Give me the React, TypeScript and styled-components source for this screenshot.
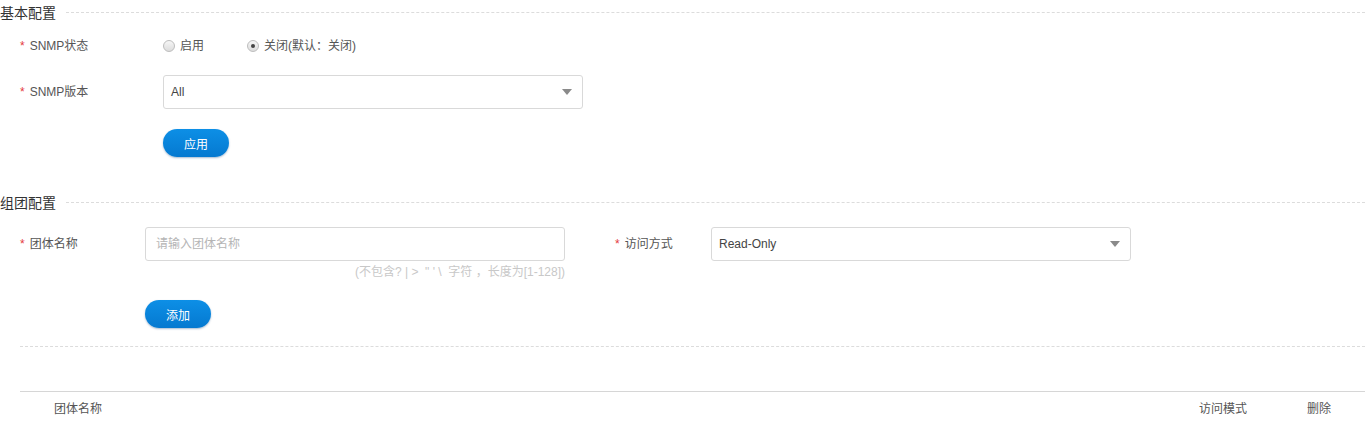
import React from "react";
import styled, { createGlobalStyle } from "styled-components";

const Global = createGlobalStyle`
  html, body { margin: 0; padding: 0; background: #fff; }
  body { font-family: "Liberation Sans", "Noto Sans CJK SC", sans-serif; font-size: 12px; color: #555; }
  * { box-sizing: border-box; }
`;

const Page = styled.div`
  width: 1365px;
  display: flex;
  flex-direction: column;
`;

const SectionHead = styled.div<{ $mt?: number }>`
  display: flex;
  align-items: center;
  height: 24px;
  margin-top: ${(p) => p.$mt ?? 0}px;
  gap: 10px;
`;

const SectionTitle = styled.span`
  font-size: 14px;
  color: #333;
  font-family: "Noto Sans CJK SC", sans-serif;
  line-height: 24px;
  width: 56px;
`;

const DashLine = styled.div`
  flex: 1;
  border-top: 1px dashed #dcdcdc;
`;

const Row = styled.div<{ $mt: number; $h: number }>`
  display: flex;
  align-items: center;
  padding-left: 20px;
  margin-top: ${(p) => p.$mt}px;
  height: ${(p) => p.$h}px;
  line-height: 16px;
`;

const Label = styled.div<{ $w: number }>`
  width: ${(p) => p.$w}px;
  display: flex;
  align-items: center;
  color: #555;
  font-size: 12px;
  line-height: 16px;
  flex-shrink: 0;
`;

const Star = styled.span`
  color: #e4393c;
  margin-right: 5px;
  font-size: 12px;
`;

const RadioGroup = styled.div`
  display: flex;
  align-items: center;
  gap: 43px;
`;

const RadioItem = styled.label`
  display: flex;
  align-items: center;
  gap: 5px;
  color: #555;
`;

const RadioDot = styled.span<{ $on?: boolean }>`
  width: 12px;
  height: 12px;
  border-radius: 50%;
  border: 1px solid #bdbdbd;
  background: linear-gradient(#f6f6f6, #dcdcdc);
  display: flex;
  align-items: center;
  justify-content: center;
  &::after {
    content: "";
    display: ${(p) => (p.$on ? "block" : "none")};
    width: 4px;
    height: 4px;
    border-radius: 50%;
    background: #444;
  }
`;

const Field = styled.div`
  width: 420px;
  height: 34px;
  border: 1px solid #d9d9d9;
  border-radius: 3px;
  display: flex;
  align-items: center;
  padding: 0 10px 0 7px;
  background: #fff;
  color: #444;
  font-size: 12px;
`;

const FieldText = styled.span<{ $ph?: boolean }>`
  flex: 1;
  color: ${(p) => (p.$ph ? "#b5b5b5" : "#444")};
  padding-left: ${(p) => (p.$ph ? 3 : 0)}px;
`;

const Arrow = styled.span`
  width: 0;
  height: 0;
  border-left: 5px solid transparent;
  border-right: 5px solid transparent;
  border-top: 6px solid #8a8a8a;
`;

const Btn = styled.button<{ $ml: number; $mt: number }>`
  margin-left: ${(p) => p.$ml}px;
  margin-top: ${(p) => p.$mt}px;
  width: 66px;
  height: 28px;
  border: none;
  border-radius: 14px;
  background: linear-gradient(#0d8fe6, #0579d0);
  box-shadow: 0 1px 2px rgba(0, 60, 120, 0.35);
  color: #fff;
  font-size: 12px;
  font-family: "Noto Sans CJK SC", sans-serif;
  padding: 0;
  align-self: flex-start;
`;

const FieldCol = styled.div`
  display: flex;
  flex-direction: column;
  width: 420px;
  position: relative;
`;

const Hint = styled.div`
  position: absolute;
  top: 37px;
  right: 0;
  white-space: pre;
  color: #c8c8c8;
  font-size: 12px;
  line-height: 16px;
`;

const Spacer = styled.div<{ $w: number }>`
  width: ${(p) => p.$w}px;
  flex-shrink: 0;
`;

const Divider = styled.div<{ $mt: number; $solid?: boolean }>`
  margin-left: 20px;
  margin-top: ${(p) => p.$mt}px;
  border-top: 1px ${(p) => (p.$solid ? "solid #d6d6d6" : "dashed #dcdcdc")};
`;

const TableHead = styled.div`
  margin-left: 20px;
  padding-left: 34px;
  display: grid;
  grid-template-columns: 1fr 108px 58px;
  height: 30px;
  align-items: center;
  color: #555;
  font-size: 12px;
`;

export default function App() {
  return (
    <Page>
      <Global />
      <SectionHead>
        <SectionTitle>基本配置</SectionTitle>
        <DashLine />
      </SectionHead>

      <Row $mt={10} $h={24}>
        <Label $w={143}>
          <Star>*</Star>SNMP状态
        </Label>
        <RadioGroup>
          <RadioItem>
            <RadioDot />
            启用
          </RadioItem>
          <RadioItem>
            <RadioDot $on />
            关闭(默认：关闭)
          </RadioItem>
        </RadioGroup>
      </Row>

      <Row $mt={17} $h={34}>
        <Label $w={143}>
          <Star>*</Star>SNMP版本
        </Label>
        <Field>
          <FieldText>All</FieldText>
          <Arrow />
        </Field>
      </Row>

      <Btn $ml={163} $mt={20}>应用</Btn>

      <SectionHead $mt={33}>
        <SectionTitle>组团配置</SectionTitle>
        <DashLine />
      </SectionHead>

      <Row $mt={13} $h={34}>
        <Label $w={125}>
          <Star>*</Star>团体名称
        </Label>
        <FieldCol>
          <Field>
            <FieldText $ph>请输入团体名称</FieldText>
          </Field>
          <Hint>{"(不包含? | > \u00a0\" ' \\  字符 ，长度为[1-128])"}</Hint>
        </FieldCol>
        <Spacer $w={50} />
        <Label $w={96}>
          <Star>*</Star>访问方式
        </Label>
        <Field>
          <FieldText>Read-Only</FieldText>
          <Arrow />
        </Field>
      </Row>

      <Btn $ml={145} $mt={39}>添加</Btn>

      <Divider $mt={18} />
      <Divider $mt={44} $solid />
      <TableHead>
        <span>团体名称</span>
        <span>访问模式</span>
        <span>删除</span>
      </TableHead>
    </Page>
  );
}
